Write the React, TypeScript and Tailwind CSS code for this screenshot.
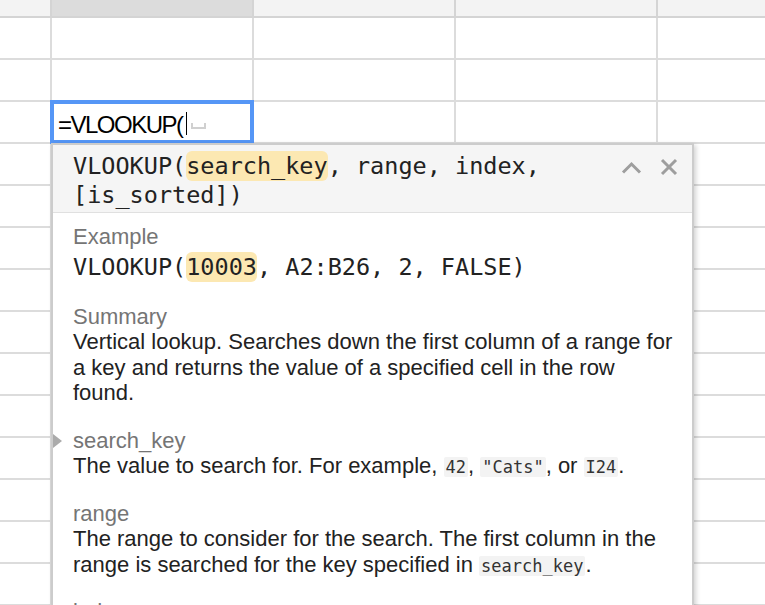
import React from 'react';

const ROWS = 14;
const mono = { fontFamily: '"DejaVu Sans Mono", "Liberation Mono", monospace' };

function Code({ children }: { children: React.ReactNode }) {
  return (
    <span className="rounded-[2px] bg-[#f3f3f3] px-[2px] text-[17px] leading-none text-[#333]" style={mono}>
      {children}
    </span>
  );
}

function Mark({ children }: { children: React.ReactNode }) {
  return <span className="rounded-[6px] bg-[#fce8b2] py-[1px]">{children}</span>;
}

function Section({ label, children, active = false, first = false }: { label: string; children: React.ReactNode; active?: boolean; first?: boolean }) {
  return (
    <div className={`relative ${first ? '' : 'mt-[22px]'}`}>
      {active && (
        <span className="absolute left-[-20px] top-[6px] h-0 w-0 border-y-[7px] border-l-[9px] border-y-transparent border-l-[#ababab]" />
      )}
      <div className="text-[#757575]">{label}</div>
      {children}
    </div>
  );
}

export default function App() {
  return (
    <div className="relative h-[605px] w-[765px] overflow-hidden bg-white" style={{ fontFamily: '"Liberation Sans", Arial, sans-serif' }}>
      {/* grid */}
      <div className="flex h-[18px] bg-[#f3f3f3]">
        <div className="w-[52px] border-b-2 border-r-2 border-[#d4d4d4]" />
        <div className="w-[202px] border-b-2 border-r-2 border-[#d4d4d4] bg-[#dcdcdc]" />
        <div className="w-[202px] border-b-2 border-r-2 border-[#d4d4d4]" />
        <div className="w-[202px] border-b-2 border-r-2 border-[#d4d4d4]" />
        <div className="flex-1 border-b-2 border-[#d4d4d4]" />
      </div>
      {Array.from({ length: ROWS }).map((_, i) => (
        <div key={i} className="flex h-[42px]">
          <div className="w-[52px] border-b-2 border-r-2 border-[#dcdcdc]" />
          <div className="w-[202px] border-b-2 border-r-2 border-[#dcdcdc]" />
          <div className="w-[202px] border-b-2 border-r-2 border-[#dcdcdc]" />
          <div className="w-[202px] border-b-2 border-r-2 border-[#dcdcdc]" />
          <div className="flex-1 border-b-2 border-[#dcdcdc]" />
        </div>
      ))}

      {/* cell being edited */}
      <div className="absolute left-[50px] top-[100px] flex h-[44px] w-[204px] items-start border-4 border-[#5596f6] bg-white pl-[4px]">
        <span className="mt-[7px] text-[24px] leading-[28px] tracking-[-1.5px] text-black">=VLOOKUP(</span>
        <span className="ml-[3px] mt-[8px] h-[23px] w-[1px] bg-black" />
        <span className="ml-[4px] mt-[19px] h-[6px] w-[15px] border-x-2 border-b-2 border-[#d0d0d0]" />
      </div>

      {/* formula help popup */}
      <div className="absolute left-[51px] top-[143px] h-[480px] w-[643px] border-2 border-[#cccccc] bg-white shadow-[2px_2px_5px_rgba(0,0,0,0.18)]">
        <div className="flex items-start border-b border-[#e0e0e0] bg-[#f5f5f5] pb-[2px] pl-[20px] pr-[14px] pt-[7px]">
          <div className="flex-1 pr-[60px] text-[23.5px] leading-[29px] text-[#222]" style={mono}>
            VLOOKUP(<Mark>search_key</Mark>, range, index, [is_sorted])
          </div>
          <div className="flex items-center gap-[18px] pt-[6px]">
            <svg width="21" height="13" viewBox="0 0 21 13" fill="none" stroke="#9e9e9e" strokeWidth="3">
              <polyline points="2,11.5 10.5,3 19,11.5" />
            </svg>
            <svg width="18" height="18" viewBox="0 0 18 18" fill="none" stroke="#9e9e9e" strokeWidth="3">
              <line x1="2" y1="2" x2="16" y2="16" />
              <line x1="16" y1="2" x2="2" y2="16" />
            </svg>
          </div>
        </div>

        <div className="pl-[20px] pr-[15px] pt-[11px] text-[22px] leading-[25.5px] text-[#222]">
          <Section label="Example" first>
            <div className="mt-[2px] text-[23.5px] leading-[30px]" style={mono}>
              VLOOKUP(<Mark>10003</Mark>, A2:B26, 2, FALSE)
            </div>
          </Section>
          <Section label="Summary">
            <div>Vertical lookup. Searches down the first column of a range for a key and returns the value of a specified cell in the row found.</div>
          </Section>
          <Section label="search_key" active>
            <div>
              The value to search for. For example, <Code>42</Code>, <Code>"Cats"</Code>, or <Code>I24</Code>.
            </div>
          </Section>
          <Section label="range">
            <div>
              The range to consider for the search. The first column in the range is searched for the key specified in <Code>search_key</Code>.
            </div>
          </Section>
          <Section label="index">
            <div>The column index of the value to be returned, where the first column in range is numbered 1.</div>
          </Section>
        </div>
      </div>
    </div>
  );
}
